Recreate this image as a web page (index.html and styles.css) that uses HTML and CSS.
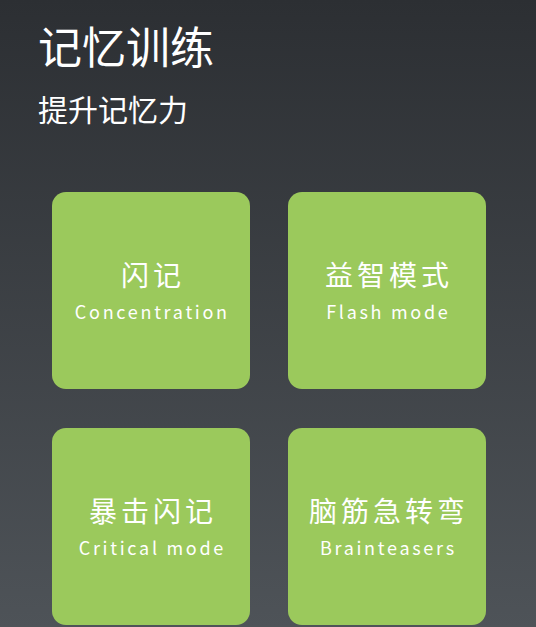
FILE: index.html
```html
<!DOCTYPE html>
<html lang="zh-CN">
<head>
<meta charset="utf-8">
<title>记忆训练</title>
<link rel="stylesheet" href="styles.css">
</head>
<body>
<div class="header">
  <h1>记忆训练</h1>
  <p>提升记忆力</p>
</div>

<div class="modes">
  <div class="card">
    <div class="name">闪记</div>
    <div class="en">Concentration</div>
  </div>
  <div class="card">
    <div class="name">益智模式</div>
    <div class="en">Flash mode</div>
  </div>
  <div class="card">
    <div class="name">暴击闪记</div>
    <div class="en">Critical mode</div>
  </div>
  <div class="card">
    <div class="name">脑筋急转弯</div>
    <div class="en">Brainteasers</div>
  </div>
</div>
</body>
</html>
```

FILE: styles.css
```css
html, body {
  margin: 0;
  height: 100%;
}
body {
  background: linear-gradient(#2c2f33, #4e5358);
  font-family: "Noto Sans CJK SC", "Noto Sans", sans-serif;
  color: white;
  overflow: hidden;
}
.header {
  padding: 13px 38px 0;
}
.header h1 {
  margin: 0;
  font-size: 44px;
  font-weight: normal;
  line-height: 64px;
}
.header p {
  margin: 11px 0 0;
  font-size: 30px;
  line-height: 40px;
}
.modes {
  display: grid;
  grid-template-columns: 198px 198px;
  grid-auto-rows: 197px;
  column-gap: 38px;
  row-gap: 39px;
  padding: 64px 0 0 52px;
}
.card {
  background-color: #9bc95c;
  border-radius: 14px;
  display: flex;
  flex-direction: column;
  align-items: center;
  justify-content: center;
}
.card .name {
  font-size: 28px;
  letter-spacing: 4px;
  margin-right: -4px;
  line-height: 36px;
}
.card .en {
  font-size: 18px;
  letter-spacing: 2.7px;
  margin-right: -2.7px;
  line-height: 30px;
  margin-top: 4px;
}
```
